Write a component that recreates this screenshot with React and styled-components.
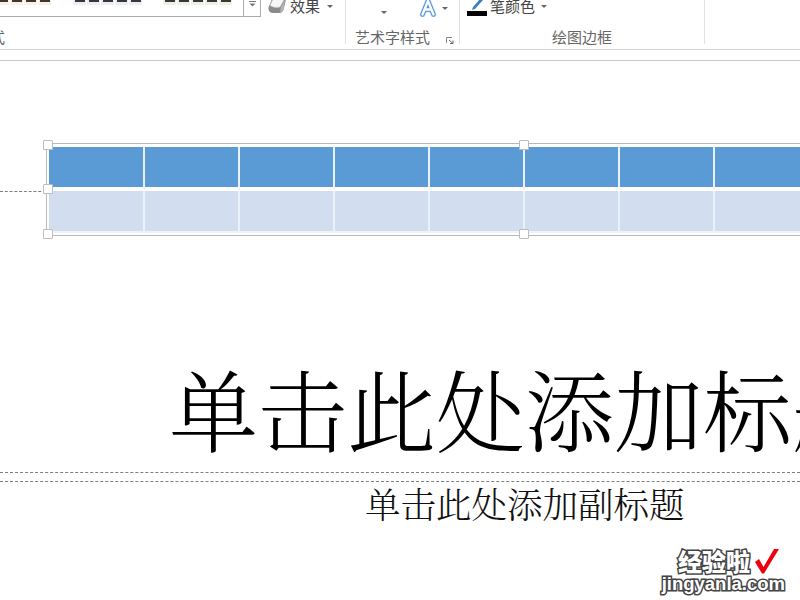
import React from 'react'
import styled, { createGlobalStyle } from 'styled-components'

const GlobalStyle = createGlobalStyle`
    html, body {
        margin: 0;
        padding: 0;
        background: #fff;
    }
    body {
        font-family: "Noto Sans CJK SC", "Liberation Sans", sans-serif;
    }
`

const Page = styled.div`
    width: 800px;
    height: 600px;
    overflow: hidden;
    position: relative;
    background: #fff;
`

const Ribbon = styled.div`
    display: flex;
    height: 49px;
    border-bottom: 1px solid #d4d4d4;
    overflow: hidden;
`

const Group = styled.div`
    width: ${props => props.width}px;
    height: 44px;
    flex-shrink: 0;
    display: flex;
    flex-direction: column;
    border-right: 1px solid #e1e1e1;
    box-sizing: border-box;
`

const GroupBody = styled.div`
    height: 17px;
    display: flex;
    align-items: flex-end;
`

const GroupLabel = styled.div`
    height: 27px;
    font-size: 15px;
    line-height: 40px;
    color: #666;
    text-align: ${props => props.$align || 'center'};
    padding-left: ${props => props.$pad || 0}px;
    white-space: nowrap;
    position: relative;
`

const ClippedLabel = styled.span`
    margin-left: -10px;
`

const Gallery = styled.div`
    width: 261px;
    height: 17px;
    flex-shrink: 0;
    box-sizing: border-box;
    border: 1px solid #ababab;
    border-top: none;
    border-left: none;
    display: flex;
`

const SwatchSet = styled.div`
    margin-left: ${props => props.$gap}px;
    height: 5px;
    display: flex;
    gap: 1px;
    flex-shrink: 0;
`

const Swatch = styled.div`
    width: 13px;
    height: 5px;
    background: ${props => props.color};
    position: relative;
    &::after {
        content: '';
        position: absolute;
        left: 2px;
        right: 1px;
        top: 0;
        height: 2px;
        background: #3a3734;
    }
`

const GalleryButton = styled.div`
    margin-left: auto;
    width: 17px;
    box-sizing: border-box;
    border-left: 1px solid #ababab;
    display: flex;
    align-items: flex-start;
    justify-content: center;
    padding-top: 1px;
`

const ToolLabel = styled.span`
    font-size: 15px;
    line-height: 20px;
    color: #444;
    white-space: nowrap;
`

const Caret = styled.span`
    width: 0;
    height: 0;
    flex-shrink: 0;
    border-left: 3px solid transparent;
    border-right: 3px solid transparent;
    border-top: 3px solid #666;
    margin-left: ${props => props.$left || 0}px;
    margin-bottom: ${props => props.$bottom || 0}px;
`

const EffectTool = styled.div`
    display: flex;
    align-items: center;
    gap: 4px;
    margin-left: 7px;
    height: 24px;
    margin-bottom: -1px;
    ${Caret} {
        margin-left: 3px;
    }
`

const WordArtTools = styled.div`
    display: flex;
    align-items: flex-end;
    width: 100%;
    height: 17px;
`

const LetterSvg = styled.svg`
    margin-left: 32px;
    flex-shrink: 0;
`

const PenTool = styled.div`
    display: flex;
    align-items: center;
    margin-left: 7px;
    height: 24px;
    margin-bottom: -1px;
    gap: 3px;
    ${Caret} {
        margin-left: 3px;
    }
`

const PenSvg = styled.svg`
    align-self: flex-end;
    margin-bottom: 2px;
`

const Launcher = styled.svg`
    position: absolute;
    right: 5px;
    top: 20px;
`

const Gutter = styled.div`
    height: 10px;
    border-bottom: 1px solid #c6c6c6;
`

const Slide = styled.div`
    position: relative;
    height: 539px;
    padding-top: 82px;
    box-sizing: border-box;
`

const GuideLine = styled.div`
    position: absolute;
    left: 0;
    top: ${props => props.top}px;
    width: ${props => props.width || '100%'};
    border-top: 1px dashed #7f7f7f;
`

const TableFrame = styled.div`
    position: relative;
    margin-left: 46px;
    width: 800px;
    height: 93px;
    box-sizing: border-box;
    border: 1px solid #b9b9b9;
    padding: 3px 0 0 2px;
    background: #fff;
`

const Handle = styled.div`
    position: absolute;
    left: ${props => props.x}px;
    top: ${props => props.y}px;
    width: 10px;
    height: 10px;
    box-sizing: border-box;
    background: #fff;
    border: 1px solid #bdbdbd;
    border-radius: 1px;
`

const SlideTable = styled.div`
    display: grid;
    grid-template-columns: 96px repeat(8, 95px);
    grid-template-rows: 44px 42px;
`

const Cell = styled.div`
    background: ${props => (props.$head ? '#5b9bd5' : '#d2deef')};
    border-right: 2px solid #eaf1f9;
    border-bottom: ${props => (props.$head ? '4px solid #fff' : '2px solid #eef3fa')};
    box-sizing: border-box;
`

const Title = styled.div`
    margin-top: 116px;
    padding-left: 169px;
    font-family: "Noto Serif CJK SC", "Noto Sans CJK SC", serif;
    font-size: 89px;
    line-height: 110px;
    font-weight: 300;
    color: #000;
    white-space: nowrap;
`

const Subtitle = styled.div`
    margin-top: 16px;
    padding-left: 365px;
    font-family: "Noto Serif CJK SC", "Noto Sans CJK SC", serif;
    font-size: 35.500px;
    line-height: 50px;
    font-weight: 300;
    color: #111;
    white-space: nowrap;
`

const Watermark = styled.div`
    position: absolute;
    right: 15px;
    bottom: 6px;
    width: 124px;
    display: flex;
    flex-direction: column;
    align-items: flex-end;
`

const MarkTop = styled.div`
    display: flex;
    align-items: center;
    gap: 5px;
    height: 26px;
    margin-right: 6px;
`

const MarkCn = styled.span`
    font-size: 24px;
    line-height: 26px;
    font-weight: 900;
    color: #fff;
    -webkit-text-stroke: 3px #444;
    paint-order: stroke fill;
`

const MarkEn = styled.span`
    font-family: "Liberation Sans", Arial, sans-serif;
    font-size: 18.500px;
    line-height: 20px;
    font-weight: 700;
    color: #fff;
    -webkit-text-stroke: 3px #444;
    paint-order: stroke fill;
`

const swatchSets = [
    { count: 4, gap: -4, color: '#fdf0e3' },
    { count: 5, gap: 22, color: '#e9eef8' },
    { count: 5, gap: 21, color: '#e9f2e4' }
]

const EffectIcon = () => (
    <svg width="18" height="14" viewBox="0 0 18 14">
        <path d="M4 0H18L16 9Q15 14 11 14H5Q1 14 .5 10Q0 8 2 5Z" fill="#8a8a8a" />
        <path d="M5 0H16.500L12 8Q6 9.500 2 6.500Z" fill="#f6f6f6" stroke="#c4c4c4" strokeWidth=".6" />
        <path d="M13 8L17 1L16 9Q15 13 12 13Z" fill="#b3b3b3" />
    </svg>
)

const LetterIcon = () => (
    <LetterSvg width="18" height="18" viewBox="0 0 18 18">
        <path d="M9 2L3.500 15.500M9 2L14.500 15.500M6 10.500H12" fill="none" stroke="#c4dcf3" strokeWidth="5.800" strokeLinecap="round" strokeLinejoin="round" />
        <path d="M9 2L3.500 15.500M9 2L14.500 15.500M6 10.500H12" fill="none" stroke="#4a8fd6" strokeWidth="4.400" strokeLinecap="round" strokeLinejoin="round" />
        <path d="M9 2L3.500 15.500M9 2L14.500 15.500M6 10.500H12" fill="none" stroke="#fff" strokeWidth="2.400" strokeLinecap="round" strokeLinejoin="round" />
    </LetterSvg>
)

const PenIcon = () => (
    <PenSvg width="20" height="16" viewBox="0 0 20 16">
        <rect x="0" y="11" width="20" height="5" fill="#000" />
        <path d="M5 10L6 7L13 -1L16 0L8 9Z" fill="#3f7fbf" />
    </PenSvg>
)

const App = () => {
    const cells = Array.from({ length: 9 })
    return (
        <Page>
            <GlobalStyle />
            <Ribbon>
                <Group width={346}>
                    <GroupBody>
                        <Gallery>
                            {swatchSets.map(set => (
                                <SwatchSet key={set.color} $gap={set.gap}>
                                    {Array.from({ length: set.count }).map((_, i) => (
                                        <Swatch key={i} color={set.color} />
                                    ))}
                                </SwatchSet>
                            ))}
                            <GalleryButton>
                                <svg width="7" height="6" viewBox="0 0 7 6">
                                    <path d="M0 .5H7" stroke="#777" />
                                    <path d="M.5 2.500H6.500L3.500 5.500Z" fill="#777" />
                                </svg>
                            </GalleryButton>
                        </Gallery>
                        <EffectTool>
                            <EffectIcon />
                            <ToolLabel>效果</ToolLabel>
                            <Caret />
                        </EffectTool>
                    </GroupBody>
                    <GroupLabel $align="left"><ClippedLabel>式</ClippedLabel></GroupLabel>
                </Group>
                <Group width={114}>
                    <GroupBody>
                        <WordArtTools>
                            <Caret $left={35} $bottom={3} />
                            <LetterIcon />
                            <Caret $left={5} $bottom={7} />
                        </WordArtTools>
                    </GroupBody>
                    <GroupLabel $align="left" $pad={9}>
                        艺术字样式
                        <Launcher width="8" height="7" viewBox="0 0 8 7">
                            <path d="M.5 6V.5H6" fill="none" stroke="#888" />
                            <path d="M3 3L7 6.500M7 3.500V6.500H4" fill="none" stroke="#666" />
                        </Launcher>
                    </GroupLabel>
                </Group>
                <Group width={245}>
                    <GroupBody>
                        <PenTool>
                            <PenIcon />
                            <ToolLabel>笔颜色</ToolLabel>
                            <Caret />
                        </PenTool>
                    </GroupBody>
                    <GroupLabel>绘图边框</GroupLabel>
                </Group>
            </Ribbon>
            <Gutter />
            <Slide>
                <GuideLine top={130} width="46px" />
                <GuideLine top={411} />
                <GuideLine top={420} />
                <TableFrame>
                    <SlideTable>
                        {cells.map((_, i) => <Cell key={`h${i}`} $head />)}
                        {cells.map((_, i) => <Cell key={`b${i}`} />)}
                    </SlideTable>
                    <Handle x={-4} y={-4} />
                    <Handle x={-4} y={40} />
                    <Handle x={-4} y={85} />
                    <Handle x={472} y={-4} />
                    <Handle x={472} y={85} />
                </TableFrame>
                <Title>单击此处添加标题</Title>
                <Subtitle>单击此处添加副标题</Subtitle>
            </Slide>
            <Watermark>
                <MarkTop>
                    <MarkCn>经验啦</MarkCn>
                    <svg width="24" height="25" viewBox="0 0 24 25">
                        <path d="M0 13L4 10L8.500 18L19 0H24L9 24.500H7Z" fill="#f0000f" />
                    </svg>
                </MarkTop>
                <MarkEn>jingyanla.com</MarkEn>
            </Watermark>
        </Page>
    )
}

export default App
